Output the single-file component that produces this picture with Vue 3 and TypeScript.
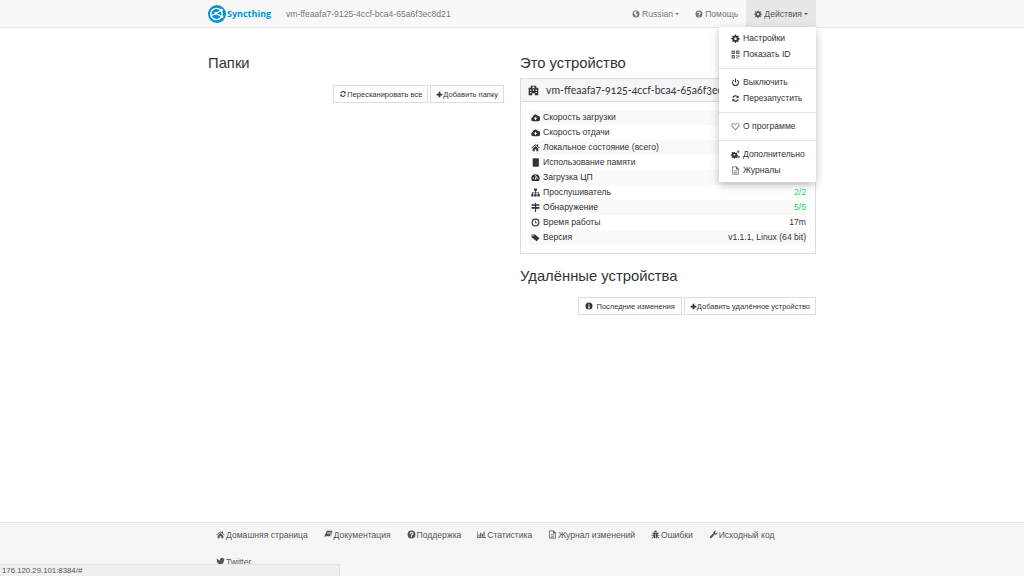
<script setup lang="ts">
const icons: Record<string, string> = {
  globe: 'M8 1a7 7 0 1 0 0 14A7 7 0 0 0 8 1zM5 3.500l3-1L10 4 8 6 9 8l2 1-1 3-2 1.500-1-3.500-2-2-2-1 1-2z',
  help: 'M8 1a7 7 0 1 0 0 14A7 7 0 0 0 8 1zm-1 10h2v2H7zm0-1V8.500c0-1 2.500-1 2.500-2.500 0-1.300-2.800-1.300-3 .3L4.500 6C5 2.500 11.500 2.500 11.500 6c0 2.300-2.500 2.300-2.500 4z',
  gear: 'M7 1h2l.4 2 1.500.6L12.600 2.500 14 4l-1.100 1.700.6 1.500 2 .4v2l-2 .4-.6 1.500L14 13l-1.400 1.400-1.700-1.100-1.500.6-.4 2H7l-.4-2-1.500-.6L3.400 14.400 2 13l1.100-1.700-.6-1.500-2-.4v-2l2-.4.6-1.500L2 4l1.400-1.500 1.700 1.100 1.500-.6zM8 6a2.300 2.300 0 1 0 0 4.600A2.300 2.300 0 0 0 8 6z',
  qr: 'M1 1h6v6H1zm2 2v2h2V3zm6-2h6v6H9zm2 2v2h2V3zM1 9h6v6H1zm2 2v2h2v-2zm6-2h2v2H9zm4 0h2v4h-2zm-2 2h2v2h-2zm-2 2h2v2H9zm4 1h2v1h-2z',
  power: 'M7 1h2v7H7zM4.500 3l1.200 1.600a4.200 4.200 0 1 0 4.600 0L11.500 3a6.200 6.200 0 1 1-7 0z',
  refresh: 'M13.500 2.500v4.500H9l1.700-1.700A4 4 0 0 0 4.300 6.500H2.200A6 6 0 0 1 12.100 3.900zM2.500 13.500V9H7l-1.700 1.700a4 4 0 0 0 6.400-1.200h2.100A6 6 0 0 1 3.900 12.100z',
  heart: 'M8 14.500 2 8.500C-.5 5.500 1.500 2 4.500 2 6 2 7.300 3 8 4c.7-1 2-2 3.500-2 3 0 5 3.500 2.500 6.500zm0-1.800 4.900-5c1.600-2 .4-4.500-1.500-4.500-1.600 0-2.600 1.300-3.400 2.800C7.200 4.500 6.200 3.200 4.600 3.200c-1.900 0-3.100 2.500-1.500 4.500z',
  cogs: 'M5 3.500h2l.3 1.300 1.200.5 1.100-.7 1.400 1.400-.7 1.100.5 1.200 1.200.3v2l-1.200.3-.5 1.200.7 1.100-1.400 1.400-1.100-.7-1.200.5L7 15.200H5l-.3-1.300-1.200-.5-1.100.7L1 12.200l.7-1.100-.5-1.200L0 9.600v-2l1.200-.3.500-1.200L1 5 2.400 3.600l1.100.7 1.200-.5zm1 3.500a1.600 1.600 0 1 0 0 3.200A1.600 1.600 0 0 0 6 7zM13 1a2 2 0 1 1 0 4 2 2 0 0 1 0-4zm0 1.300a.7.7 0 1 0 0 1.400.7.7 0 0 0 0-1.400zM13.500 10a2 2 0 1 1 0 4 2 2 0 0 1 0-4zm0 1.300a.7.7 0 1 0 0 1.400.7.7 0 0 0 0-1.400z',
  file: 'M2 1h8l4 4v10H2zm1.200 1.200v11.600h9.600V6H9V2.200zM5 8h6v1H5zm0 2h6v1H5zm0 2h6v1H5z',
  plus: 'M6 1.500h4V6h4.500v4H10v4.500H6V10H1.500V6H6z',
  info: 'M8 1a7 7 0 1 0 0 14A7 7 0 0 0 8 1zM7 3.500h2v2H7zM6 7h3v4.500h1V13H6v-1.500h1V8.500H6z',
  cloud: 'M4 14.500a3.800 3.800 0 0 1-.8-7.500A4.800 4.800 0 0 1 12.300 5.500 4.500 4.500 0 0 1 12 14.500zM8 6.500 4.800 10H7v2.500h2V10h2.200z',
  home: 'M8 2 .5 8.500l1 1L8 4l6.500 5.500 1-1L12.500 6V2.500h-2V4.300zM3 10 8 5.500l5 4.500v4.500H9.500V11h-3v3.500H3z',
  memory: 'M4 .5h9l1 1v13l-1 1H4l-1-1v-13z',
  gauge: 'M8 2a7.500 7.500 0 0 0-7.500 7.500c0 1.700.5 3.200 1.400 4.500h12.200c.9-1.300 1.400-2.800 1.400-4.500A7.500 7.500 0 0 0 8 2zM7 4h2v2H7zM3 8h2v2H3zm8 0h2v2h-2zM7.200 9.500 10 5.500l.8.5L9 10.500a1.200 1.200 0 1 1-1.800-1z',
  sitemap: 'M5.500 1h5v4H8.700v2H14v3h1.500v5h-4v-5H13V8H8.700v2H10v5H6v-5h1.300V8H3v2h1.500v5h-4v-5H2V7h5.300V5H5.500z',
  sign: 'M7 0h2v2h6v3H9v2h6v3H9v6H7v-6H1V7h6V5H1V2h6z',
  clock: 'M8 1a7 7 0 1 0 0 14A7 7 0 0 0 8 1zm0 2a5 5 0 1 1 0 10A5 5 0 0 1 8 3zM7.300 4.500h1.400v3.600h2.800v1.400H7.300z',
  tag: 'M1 2.500h6l8 7-5 5-9-7zm2.500 1a1.200 1.200 0 1 0 0 2.400 1.200 1.200 0 0 0 0-2.400z',
  book: 'M5 1.500h10l-3 11.500H2.500c-1 0-1-2 0-2H11l2.500-9.500L12 13H2.500C1 13 .5 11.500 1 10zM6 4v1h6V4zm-.5 2v1h6V6z',
  bars: 'M0 2h1v11h15v1H0zm2.500 6h2v4h-2zm3-3h2v7h-2zm3 2h2v5h-2zm3-4h2v9h-2z',
  bug: 'M5.500 3.500a2.500 2.500 0 0 1 5 0zM4 4.500h8V6l2-1.500.7.8L12 7.500V9h3v1h-3v1.500l2.700 2-.7 1-2.300-1.500C11 14.500 9.500 15 8.500 15V7h-1v8c-1 0-2.500-.5-3.200-2L2 14.500l-.7-1 2.700-2V10H1V9h3V7.500L1.300 5.300l.7-.8L4 6z',
  wrench: 'M13 1.500 10.500 4l.5 1.500 1.500.5L15 3.500c.5 2.500-1 5-3.700 5-.5 0-1-.1-1.500-.3L4.500 14c-1 1-2.500.5-3-.5-.3-.7-.2-1.500.5-2.200L7.500 6c-.5-2.800 2.300-5.400 5.500-4.500z',
  twitter: 'M15.500 3.500c-.5.300-1 .5-1.700.6.600-.4 1.100-1 1.300-1.700-.6.300-1.200.6-1.900.7A3.100 3.100 0 0 0 7.700 6C5.200 5.900 3 4.700 1.500 2.800c-.8 1.400-.4 3.200 1 4.100-.5 0-1-.2-1.400-.4 0 1.500 1.100 2.800 2.500 3.100-.5.100-1 .1-1.400 0 .4 1.200 1.600 2.100 2.900 2.200A6.300 6.300 0 0 1 .5 13.100 8.900 8.900 0 0 0 14.300 5.200c.5-.5 1-1 1.200-1.700z',
  device: 'M4 1h8v3h3v11H10v-3H6v3H1V4h3zM6.500 2.300v2.400h3V2.300zM3 6.500v2h2v-2zm4 0v2h2v-2zm4 0v2h2v-2zM3 10v2h2v-2zm8 0v2h2v-2z',
}

const menu = [
  [{ i: 'gear', t: 'Настройки' }, { i: 'qr', t: 'Показать ID', gray: true }],
  [{ i: 'power', t: 'Выключить' }, { i: 'refresh', t: 'Перезапустить' }],
  [{ i: 'heart', t: 'О программе', gray: true }],
  [{ i: 'cogs', t: 'Дополнительно' }, { i: 'file', t: 'Журналы', gray: true }],
]

const rows = [
  { i: 'cloud', t: 'Скорость загрузки', v: '' },
  { i: 'cloud', t: 'Скорость отдачи', v: '' },
  { i: 'home', t: 'Локальное состояние (всего)', v: '' },
  { i: 'memory', t: 'Использование памяти', v: '' },
  { i: 'gauge', t: 'Загрузка ЦП', v: '' },
  { i: 'sitemap', t: 'Прослушиватель', v: '2/2', ok: true },
  { i: 'sign', t: 'Обнаружение', v: '5/5', ok: true },
  { i: 'clock', t: 'Время работы', v: '17m' },
  { i: 'tag', t: 'Версия', v: 'v1.1.1, Linux (64 bit)' },
]

const links = [
  { i: 'home', t: 'Домашняя страница' },
  { i: 'book', t: 'Документация' },
  { i: 'help', t: 'Поддержка' },
  { i: 'bars', t: 'Статистика' },
  { i: 'file', t: 'Журнал изменений' },
  { i: 'bug', t: 'Ошибки' },
  { i: 'wrench', t: 'Исходный код' },
  { i: 'twitter', t: 'Twitter' },
]
</script>

<template>
  <div class="page">
    <header class="navbar">
      <div class="wrap nav-inner">
        <a class="brand">
          <svg class="logo" viewBox="0 0 32 32" width="18" height="18">
            <circle cx="16" cy="16" r="16" fill="#0891d1" />
            <circle cx="15" cy="16" r="10" fill="none" stroke="#fff" stroke-width="2.400" />
            <path d="M4 20 14 15l10-6M14 15l11 6" fill="none" stroke="#fff" stroke-width="2" />
            <circle cx="24" cy="9" r="2.500" fill="#fff" />
            <circle cx="25" cy="21" r="2.500" fill="#fff" />
            <circle cx="14" cy="15" r="2.500" fill="#fff" />
          </svg>
          <span class="brand-name">Syncthing</span>
        </a>
        <span class="host">vm-ffeaafa7-9125-4ccf-bca4-65a6f3ec8d21</span>
        <nav class="nav-right">
          <a class="nav-item"><svg class="ic" viewBox="0 0 16 16"><path :d="icons.globe" /></svg>Russian<i class="caret" /></a>
          <a class="nav-item"><svg class="ic" viewBox="0 0 16 16"><path :d="icons.help" /></svg>Помощь</a>
          <a class="nav-item open"><svg class="ic" viewBox="0 0 16 16"><path :d="icons.gear" /></svg>Действия<i class="caret" /></a>
          <div class="dropdown">
            <template v-for="(group, gi) in menu" :key="gi">
              <hr v-if="gi > 0" class="divider" />
              <a v-for="item in group" :key="item.t" class="menu-item">
                <svg class="ic menu-ic" :class="{ gray: item.gray }" viewBox="0 0 16 16"><path :d="icons[item.i]" /></svg>{{ item.t }}
              </a>
            </template>
          </div>
        </nav>
      </div>
    </header>

    <main class="wrap columns">
      <section class="col">
        <h3 class="title">Папки</h3>
        <div class="actions first">
          <button class="btn"><svg class="ic" viewBox="0 0 16 16"><path :d="icons.refresh" /></svg>Пересканировать все</button>
          <button class="btn"><svg class="ic tight" viewBox="0 0 16 16"><path :d="icons.plus" /></svg>Добавить папку</button>
        </div>
      </section>
      <section class="col">
        <h3 class="title">Это устройство</h3>
        <div class="panel">
          <div class="panel-head">
            <svg class="head-ic" viewBox="0 0 16 16"><path :d="icons.device" /></svg>
            <span class="panel-title">vm-ffeaafa7-9125-4ccf-bca4-65a6f3ec8d21</span>
          </div>
          <div class="panel-body">
            <div v-for="row in rows" :key="row.t" class="row">
              <span class="row-label"><svg class="ic row-ic" viewBox="0 0 16 16"><path :d="icons[row.i]" /></svg>{{ row.t }}</span>
              <span :class="{ ok: row.ok }">{{ row.v }}</span>
            </div>
          </div>
        </div>
        <h3 class="title second">Удалённые устройства</h3>
        <div class="actions">
          <button class="btn wide"><svg class="ic" viewBox="0 0 16 16"><path :d="icons.info" /></svg>Последние изменения</button>
          <button class="btn"><svg class="ic tight" viewBox="0 0 16 16"><path :d="icons.plus" /></svg>Добавить удалённое устройство</button>
        </div>
      </section>
    </main>

    <footer class="footer">
      <div class="wrap foot-links">
        <a v-for="link in links" :key="link.t" class="foot-link"><svg class="ic foot-ic" viewBox="0 0 16 16"><path :d="icons[link.i]" /></svg>{{ link.t }}</a>
      </div>
    </footer>
    <div class="status">176.120.29.101:8384/#</div>
  </div>
</template>

<style>
html, body { margin: 0; background: #fff; overflow: hidden; }
</style>

<style scoped>
.page {
  position: relative;
  height: 576px;
  display: flex;
  flex-direction: column;
  overflow: hidden;
  font-family: "Liberation Sans", Arial, sans-serif;
  font-size: 8.600px;
  color: #333;
}
.wrap { width: 608px; margin: 0 auto; }
.ic { width: 9px; height: 9px; fill: currentColor; fill-rule: evenodd; flex: none; margin-right: 2px; }
.navbar {
  height: 27px;
  flex: none;
  background: #f8f8f8;
  border-bottom: 1px solid #e7e7e7;
}
.nav-inner { display: flex; align-items: stretch; height: 27px; }
.brand { display: flex; align-items: center; gap: 1px; width: 78px; }
.brand-name { font-family: "Open Sans", sans-serif; font-weight: 700; font-size: 9px; color: #0891d1; }
.host { align-self: center; color: #777; }
.nav-right { position: relative; margin-left: auto; display: flex; }
.nav-item { display: flex; align-items: center; padding: 0 8px; color: #777; }
.nav-item .ic { width: 8px; height: 8px; }
.nav-item.open { background: #e7e7e7; color: #555; }
.caret {
  display: inline-block;
  margin-left: 2px;
  border-top: 2.500px solid currentColor;
  border-left: 2.500px solid transparent;
  border-right: 2.500px solid transparent;
}
.dropdown {
  position: absolute;
  top: 27px;
  right: 0;
  width: 97px;
  height: 155px;
  box-sizing: border-box;
  padding: 3px 0;
  background: #fff;
  box-shadow: 0 3px 8px rgba(0, 0, 0, .25);
  z-index: 3;
}
.menu-item { display: flex; align-items: center; height: 16px; padding-left: 12px; color: #333; white-space: nowrap; }
.menu-ic { margin-right: 3px; }
.gray { color: #666; }
.divider { margin: 5.500px 0; border: 0; border-top: 1px solid #e5e5e5; height: 0; }
.columns { flex: 1; display: grid; grid-template-columns: 296px 296px; gap: 16px; }
.title { margin: 0; padding-top: 26px; font-weight: 400; font-size: 14.800px; line-height: 18px; color: #333; }
.title.second { padding-top: 13px; }
.actions { display: flex; justify-content: flex-end; gap: 2px; margin-top: 12px; }
.actions.first { margin-top: 13px; }
.btn {
  display: flex;
  align-items: center;
  height: 18px;
  box-sizing: border-box;
  padding: 0 5px;
  background: #fff;
  border: 1px solid #ddd;
  font: 7.500px "Liberation Sans", Arial, sans-serif;
  color: #333;
  white-space: nowrap;
}
.btn .ic { width: 8px; height: 8px; margin-right: 0; }
.btn .ic.tight { width: 7px; height: 7px; }
.btn.wide { padding: 0 6px; }
.btn.wide .ic { margin-right: 3px; }
.panel { margin-top: 6px; border: 1px solid #ddd; }
.panel-head {
  display: flex;
  align-items: center;
  height: 22px;
  padding: 0 7px;
  background: #f5f5f5;
  border-bottom: 1px solid #ddd;
  overflow: hidden;
}
.head-ic { width: 11px; height: 11px; fill: #333; fill-rule: evenodd; margin-right: 7px; flex: none; }
.panel-title { font-family: Lato, sans-serif; font-size: 10.500px; font-variant-numeric: oldstyle-nums; color: #333; white-space: nowrap; }
.panel-body { padding: 8px 8px 8px; }
.row { display: flex; justify-content: space-between; align-items: center; box-sizing: border-box; height: 15px; padding: 0 1px 1px 2px; }
.row:nth-child(odd) { background: #f9f9f9; }
.row-label { display: flex; align-items: center; }
.row-ic { margin-right: 3px; }
.ok { color: #28d466; }
.footer {
  flex: none;
  height: 53px;
  background: #f5f5f5;
  border-top: 1px solid #e5e5e5;
  overflow: hidden;
}
.foot-links { display: flex; flex-wrap: wrap; margin-top: -2px; padding-left: 8px; box-sizing: border-box; }
.foot-link { display: flex; align-items: center; height: 27px; margin-right: 15.800px; color: #555; white-space: nowrap; }
.foot-ic { margin-right: 1px; }
.status {
  position: absolute;
  left: 0;
  bottom: 0;
  width: 340px;
  height: 12px;
  line-height: 12px;
  padding-left: 2px;
  box-sizing: border-box;
  font-size: 7.800px;
  background: #efefef;
  border-top: 1px solid #e2e2e2;
  border-right: 1px solid #e2e2e2;
  color: #555;
  z-index: 4;
}
</style>
